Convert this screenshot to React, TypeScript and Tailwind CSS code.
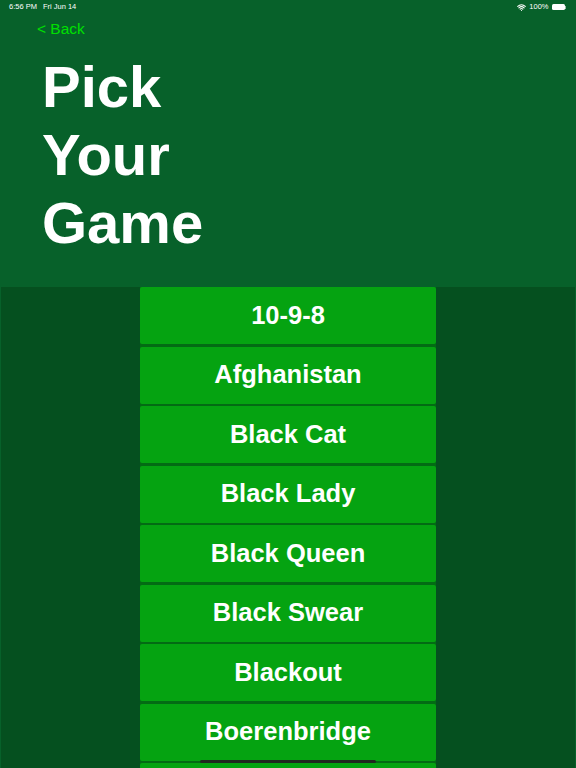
import { Wifi } from "lucide-react"

const games = [
  "10-9-8",
  "Afghanistan",
  "Black Cat",
  "Black Lady",
  "Black Queen",
  "Black Swear",
  "Blackout",
  "Boerenbridge",
  "Bridge",
]

export default function App() {
  return (
    <div className="relative w-[576px] h-[768px] overflow-hidden bg-[#07612a] font-['Liberation_Sans',Arial,sans-serif]">
      {/* status bar */}
      <div className="flex items-center justify-between h-[14px] pl-[9px] pr-[10px] text-white text-[7.5px]">
        <div className="flex gap-[6px]">
          <span>6:56 PM</span>
          <span>Fri Jun 14</span>
        </div>
        <div className="flex items-center gap-[3px]">
          <Wifi className="w-[9px] h-[9px]" strokeWidth={3} />
          <span>100%</span>
          <div className="flex items-center">
            <div className="w-[13px] h-[6px] rounded-[1.5px] bg-white" />
            <div className="w-[1px] h-[3px] bg-white/60 ml-[0.5px]" />
          </div>
        </div>
      </div>

      <div className="h-[273px] flex flex-col">
        <button className="self-start ml-[37px] mt-[6px] text-[15.5px] leading-[18px] text-[#00e000]">
          &lt; Back
        </button>
        <h1 className="ml-[42px] mt-[15px] text-[58px] leading-[68px] font-bold text-white">
          Pick
          <br />
          Your
          <br />
          Game
        </h1>
      </div>

      <div className="h-[481px] mx-[1px] bg-[#05501f] flex justify-center">
        <div className="w-[296px] flex flex-col gap-[2.5px] bg-[#036b14]">
          {games.map((g, i) => (
            <button
              key={g}
              className="h-[57px] shrink-0 rounded-[2px] bg-[#05a311] text-white font-bold text-[25.5px] leading-none"
            >
              {i < 8 ? g : ""}
            </button>
          ))}
        </div>
      </div>

      {/* home indicator */}
      <div className="absolute left-[200px] bottom-[5px] w-[176px] h-[3px] rounded-full bg-[#1f2a1f]" />
    </div>
  )
}
